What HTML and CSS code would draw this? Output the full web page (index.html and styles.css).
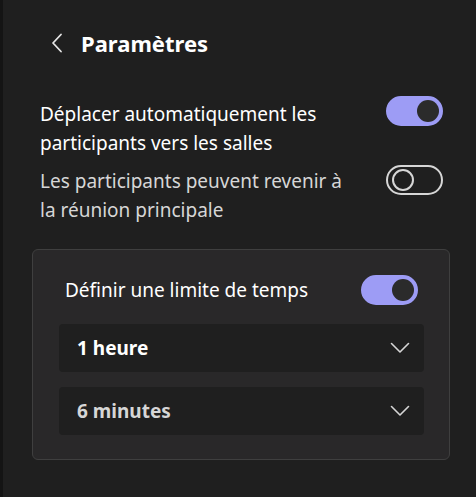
FILE: index.html
```html
<!DOCTYPE html>
<html lang="fr">
<head>
    <meta charset="UTF-8">
    <meta name="viewport" content="width=device-width, initial-scale=1.0">
    <title>Paramètres</title>
    <link rel="stylesheet" href="styles.css">
</head>
<body>
    <div class="pane">
        <div class="pane-header">
            <span class="back">
                <svg width="12" height="20" viewBox="0 0 12 20"><path d="M10 1.5 L2 10 L10 18.5" fill="none" stroke="#e6e6e6" stroke-width="1.8" stroke-linecap="round" stroke-linejoin="round"/></svg>
            </span>
            <h1>Paramètres</h1>
        </div>

        <div class="setting">
            <span class="setting-label">Déplacer automatiquement les participants vers les salles</span>
            <span class="toggle on"><span class="knob"></span></span>
        </div>
        <div class="setting muted">
            <span class="setting-label">Les participants peuvent revenir à la réunion principale</span>
            <span class="toggle"><span class="knob"></span></span>
        </div>

        <div class="time-box">
            <div class="time-row">
                <span class="setting-label">Définir une limite de temps</span>
                <span class="toggle on"><span class="knob"></span></span>
            </div>
            <div class="select">
                <span>1 heure</span>
                <svg width="20" height="12" viewBox="0 0 20 12"><path d="M1.5 1.5 L10 10 L18.5 1.5" fill="none" stroke="#d6d6d6" stroke-width="1.6" stroke-linecap="round" stroke-linejoin="round"/></svg>
            </div>
            <div class="select muted">
                <span>6 minutes</span>
                <svg width="20" height="12" viewBox="0 0 20 12"><path d="M1.5 1.5 L10 10 L18.5 1.5" fill="none" stroke="#d6d6d6" stroke-width="1.6" stroke-linecap="round" stroke-linejoin="round"/></svg>
            </div>
        </div>
    </div>
</body>
</html>
```

FILE: styles.css
```css
html, body {
    height: 100%;
}
body {
    margin: 0;
    background-color: #1f1f1f;
    color: #ffffff;
    font-family: "Noto Sans", "Open Sans", sans-serif;
}
.pane {
    min-height: 100%;
    box-sizing: border-box;
    border-left: 3px solid #141414;
    padding: 28px 26px 0 29px;
}
.pane-header {
    display: flex;
    align-items: center;
    gap: 18px;
    padding-left: 19px;
    margin-bottom: 42px;
}
.back {
    display: flex;
}
.pane-header h1 {
    margin: 0;
    font-size: 22px;
    font-weight: 700;
    line-height: 30px;
}
.setting {
    display: flex;
    align-items: flex-start;
    justify-content: space-between;
    padding: 0 7px 0 8px;
    font-size: 19px;
    line-height: 29px;
    margin-bottom: 9px;
}
.setting-label {
    flex: 1;
    margin-right: 30px;
}
.setting.muted {
    color: #d6d6d6;
}
.toggle {
    flex: none;
    box-sizing: border-box;
    width: 57px;
    height: 30px;
    border-radius: 15px;
    border: 2px solid #d6d6d6;
    display: flex;
    align-items: center;
    padding: 0 4px;
    margin-top: -4px;
}
.setting.muted .toggle {
    margin-top: -2px;
}
.knob {
    width: 18px;
    height: 18px;
    border-radius: 50%;
    border: 2px solid #d6d6d6;
}
.toggle.on {
    background-color: #9d9cf5;
    border-color: #9d9cf5;
    justify-content: flex-end;
    padding: 0 2px;
}
.toggle.on .knob {
    width: 22px;
    height: 22px;
    border: none;
    background-color: #2b2b2b;
}
.time-box {
    margin-top: 24px;
    background-color: #292829;
    border: 1px solid #3f3f3f;
    border-radius: 6px;
    padding: 25px 25px 24px 26px;
    display: flex;
    flex-direction: column;
    gap: 15px;
}
.time-row {
    display: flex;
    align-items: center;
    justify-content: space-between;
    padding: 0 6px;
    font-size: 19px;
    line-height: 29px;
    margin-bottom: 4px;
}
.time-row .toggle {
    margin-top: 0;
}
.select {
    display: flex;
    align-items: center;
    justify-content: space-between;
    height: 48px;
    background-color: #1f1f1f;
    border-radius: 4px;
    padding: 0 14px 0 18px;
    font-size: 19px;
    font-weight: 700;
}
.select.muted {
    color: #d6d6d6;
}
```
